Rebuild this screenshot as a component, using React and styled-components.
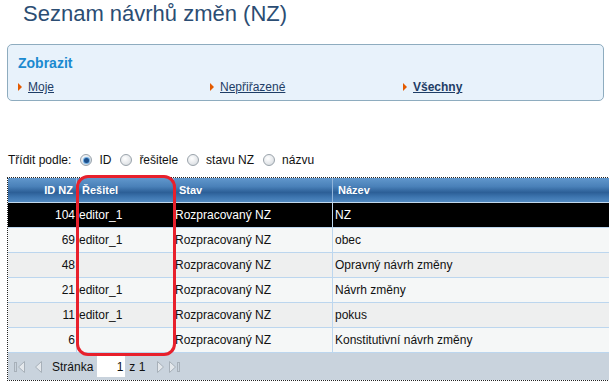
import React from "react";
import styled, { createGlobalStyle } from "styled-components";

const Global = createGlobalStyle`
  html, body { margin: 0; padding: 0; background: #fff; overflow: hidden; }
  body { font-family: "Liberation Sans", Arial, sans-serif; }
`;

const Page = styled.div`
  width: 609px;
  height: 385px;
  overflow: hidden;
  padding: 0 0 0 7px;
  box-sizing: border-box;
`;

const Title = styled.h1`
  margin: 0;
  padding: 2px 0 0 16px;
  height: 44px;
  box-sizing: border-box;
  font-family: "Liberation Sans", Arial, sans-serif;
  font-weight: normal;
  font-size: 22px;
  line-height: 24px;
  color: #2b4d73;
`;

const FilterBox = styled.div`
  width: 597px;
  height: 57px;
  box-sizing: border-box;
  border: 1px solid #8eacbf;
  border-radius: 5px;
  background: #e8f2fb;
  padding: 10px 0 0 10px;
`;

const BoxTitle = styled.div`
  font-weight: bold;
  font-size: 14px;
  line-height: 16px;
  color: #1b8ad0;
  margin-bottom: 9px;
`;

const LinkRow = styled.div`
  display: grid;
  grid-template-columns: 192px 193px 1fr;
`;

const LinkItem = styled.a`
  display: flex;
  align-items: center;
  gap: 6px;
  font-size: 12px;
  line-height: 14px;
  color: #1e3d66;
  text-decoration: underline;
  font-weight: ${(p) => (p.$bold ? "bold" : "normal")};
  cursor: pointer;
`;

const Arrow = styled.span`
  width: 0;
  height: 0;
  border-top: 4px solid transparent;
  border-bottom: 4px solid transparent;
  border-left: 4px solid #e35a00;
`;

const SortRow = styled.div`
  margin-top: 51px;
  display: flex;
  align-items: center;
  font-family: "Liberation Sans", Tahoma, sans-serif;
  font-size: 12px;
  color: #111;
  height: 16px;
  padding-left: 1px;
`;

const SortLabel = styled.span`
  margin-right: 9px;
`;

const Radio = styled.span`
  width: 12px;
  height: 12px;
  border-radius: 50%;
  box-sizing: border-box;
  border: 1px solid #9aa3ab;
  background: radial-gradient(circle at 40% 35%, #ffffff 0%, #e4e7ea 60%, #c9cfd4 100%);
  display: inline-flex;
  align-items: center;
  justify-content: center;
  margin-right: 7px;
  &::after {
    content: "";
    width: 5px;
    height: 5px;
    border-radius: 50%;
    background: ${(p) => (p.$on ? "#1d4f8a" : "transparent")};
    box-shadow: ${(p) => (p.$on ? "0 0 1px 1px #5fa4e0" : "none")};
  }
`;

const RadioText = styled.span`
  margin-right: 9px;
`;

const TableWrap = styled.div`
  position: relative;
  margin-top: 9px;
  width: 640px;
  border: 1px dotted #222;
  border-right: none;
`;

const Grid = styled.div`
  display: grid;
  grid-template-columns: 69px 97px 159px 1fr;
`;

const HeadRow = styled(Grid)`
  height: 24px;
  background: linear-gradient(#6197cc 0%, #4a81b9 35%, #2c5f97 60%, #3e76b0 80%, #5189c0 100%);
  border-bottom: 1px solid #c2d8ec;
`;

const HeadCell = styled.div`
  display: flex;
  align-items: center;
  justify-content: ${(p) => (p.$right ? "flex-end" : "flex-start")};
  padding: ${(p) => (p.$right ? "0 3px 0 0" : "0 0 0 5px")};
  font-family: "Liberation Sans", Tahoma, sans-serif;
  font-weight: bold;
  font-size: 11px;
  color: #fff;
  border-right: 1px solid #8fb4da;
  &:last-child { border-right: none; }
`;

const Row = styled(Grid)`
  height: 24px;
  background: ${(p) => (p.$sel ? "#000" : p.$odd ? "#eeefef" : "#f5f7f7")};
  color: ${(p) => (p.$sel ? "#fff" : "#111")};
  border-bottom: 1px solid #bcd6ee;
`;

const Cell = styled.div`
  display: flex;
  align-items: center;
  justify-content: ${(p) => (p.$right ? "flex-end" : "flex-start")};
  padding: ${(p) => (p.$right ? "0 1px 0 0" : p.$pad ? `0 0 0 ${p.$pad}px` : "0 0 0 1px")};
  font-size: 12px;
  border-right: 1px solid #bcd6ee;
  &:last-child { border-right: none; }
  white-space: nowrap;
`;

const Footer = styled.div`
  height: 27px;
  background: #c9d3dd;
  display: flex;
  align-items: center;
  padding-left: 6px;
  font-size: 12px;
  color: #111;
`;

const NavIcon = styled.svg`
  width: ${(p) => p.$w || 10}px;
  height: 12px;
  margin-right: ${(p) => p.$mr || 0}px;
`;

const PageInput = styled.span`
  width: 28px;
  height: 21px;
  background: #fff;
  box-sizing: border-box;
  display: inline-flex;
  align-items: center;
  justify-content: flex-end;
  padding-right: 2px;
  margin: 0 4px 0 4px;
`;

const Gap = styled.span`
  width: ${(p) => p.$w}px;
`;

const Highlight = styled.div`
  position: absolute;
  left: 68px;
  top: -3px;
  width: 100px;
  height: 181px;
  box-sizing: border-box;
  border: 3px solid #e8202c;
  border-radius: 12px;
  pointer-events: none;
`;

const rows = [
  { id: 104, r: "editor_1", s: "Rozpracovaný NZ", n: "NZ", sel: true },
  { id: 69, r: "editor_1", s: "Rozpracovaný NZ", n: "obec" },
  { id: 48, r: "", s: "Rozpracovaný NZ", n: "Opravný návrh změny" },
  { id: 21, r: "editor_1", s: "Rozpracovaný NZ", n: "Návrh změny" },
  { id: 11, r: "editor_1", s: "Rozpracovaný NZ", n: "pokus" },
  { id: 6, r: "", s: "Rozpracovaný NZ", n: "Konstitutivní návrh změny" },
];

const First = () => (
  <NavIcon $w={11} $mr={9} viewBox="0 0 11 12">
    <rect x="0.5" y="1.5" width="2" height="9" fill="none" stroke="#a7b0b9" />
    <path d="M10.5 0.5 L4.5 6 L10.5 11.5 Z" fill="#e4e8ec" stroke="#a7b0b9" />
  </NavIcon>
);
const Prev = () => (
  <NavIcon $w={8} $mr={10} viewBox="0 0 8 12">
    <path d="M7.5 0.5 L1.5 6 L7.5 11.5 Z" fill="#e4e8ec" stroke="#a7b0b9" />
  </NavIcon>
);
const Next = () => (
  <NavIcon $w={8} $mr={4} viewBox="0 0 8 12">
    <path d="M0.5 0.5 L6.5 6 L0.5 11.5 Z" fill="#e4e8ec" stroke="#a7b0b9" />
  </NavIcon>
);
const Last = () => (
  <NavIcon $w={11} viewBox="0 0 11 12">
    <path d="M0.5 0.5 L6.5 6 L0.5 11.5 Z" fill="#e4e8ec" stroke="#a7b0b9" />
    <rect x="8.5" y="1.5" width="2" height="9" fill="none" stroke="#a7b0b9" />
  </NavIcon>
);

export default function App() {
  return (
    <Page>
      <Global />
      <Title>Seznam návrhů změn (NZ)</Title>
      <FilterBox>
        <BoxTitle>Zobrazit</BoxTitle>
        <LinkRow>
          <LinkItem><Arrow />Moje</LinkItem>
          <LinkItem><Arrow />Nepřiřazené</LinkItem>
          <LinkItem $bold><Arrow />Všechny</LinkItem>
        </LinkRow>
      </FilterBox>
      <SortRow>
        <SortLabel>Třídit podle:</SortLabel>
        <Radio $on />
        <RadioText>ID</RadioText>
        <Radio />
        <RadioText>řešitele</RadioText>
        <Radio />
        <RadioText>stavu NZ</RadioText>
        <Radio />
        <RadioText>názvu</RadioText>
      </SortRow>
      <TableWrap>
        <HeadRow>
          <HeadCell $right>ID NZ</HeadCell>
          <HeadCell>Řešitel</HeadCell>
          <HeadCell>Stav</HeadCell>
          <HeadCell>Název</HeadCell>
        </HeadRow>
        {rows.map((r, i) => (
          <Row key={r.id} $sel={r.sel} $odd={i % 2 === 0}>
            <Cell $right>{r.id}</Cell>
            <Cell $pad={2}>{r.r}</Cell>
            <Cell>{r.s}</Cell>
            <Cell $pad={2}>{r.n}</Cell>
          </Row>
        ))}
        <Footer>
          <First />
          <Prev />
          Stránka
          <PageInput>1</PageInput>
          z 1
          <Gap $w={12} />
          <Next />
          <Last />
        </Footer>
        <Highlight />
      </TableWrap>
    </Page>
  );
}
